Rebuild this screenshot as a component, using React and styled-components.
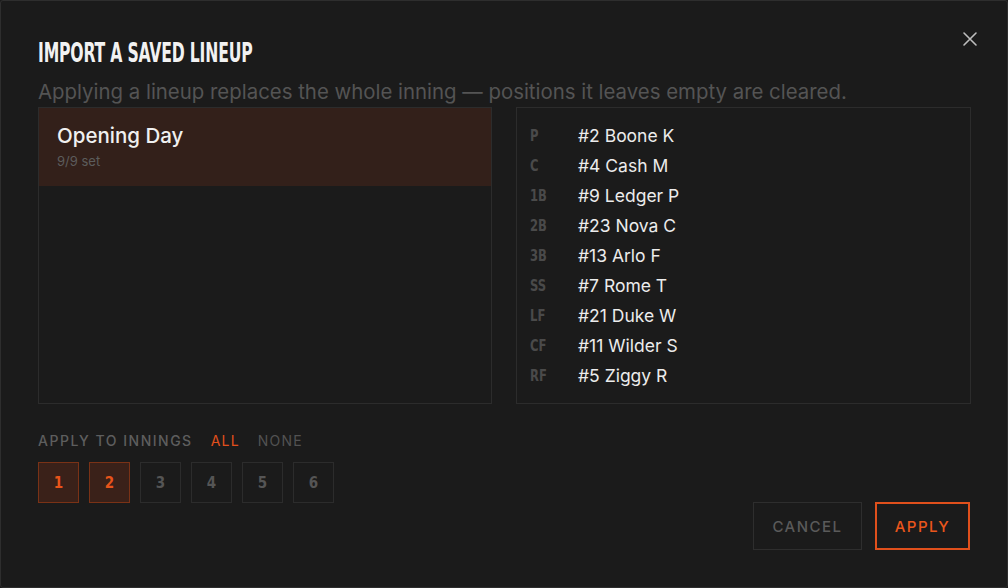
import React, { useState } from 'react'
import styled, { createGlobalStyle } from 'styled-components'

const GlobalStyle = createGlobalStyle`
  html, body { margin: 0; padding: 0; background: #1b1b1b; }
  body { font-family: Inter, "Noto Sans", sans-serif; }
  * { box-sizing: border-box; }
`

const condensed = `"Liberation Sans Narrow", "DejaVu Sans Condensed", sans-serif`

const Dialog = styled.div`
  position: relative;
  width: 1008px;
  height: 588px;
  background: #1b1b1b;
  border: 1px solid #2e2e2e;
  border-radius: 3px;
  padding: 37px 37px 0 37px;
  display: flex;
  flex-direction: column;
`

const Title = styled.h2`
  margin: 0;
  font-family: ${condensed};
  font-weight: 700;
  font-size: 27px;
  line-height: 30px;
  color: #f2f2f2;
  letter-spacing: -0.3px;
  transform: scaleX(0.645);
  transform-origin: left center;
  white-space: nowrap;
`

const CloseBtn = styled.button`
  position: absolute;
  top: 26px;
  right: 25px;
  width: 24px;
  height: 24px;
  padding: 0;
  border: none;
  background: none;
  color: #bdbdbd;
  display: flex;
  align-items: center;
  justify-content: center;
  cursor: pointer;
`

const Subtitle = styled.p`
  margin: 10px 0 0 0;
  font-size: 20.4px;
  line-height: 28px;
  color: #545454;
  white-space: nowrap;
`

const Panels = styled.div`
  display: grid;
  grid-template-columns: 454px 455px;
  gap: 24px;
  height: 297px;
  margin-top: 1px;
`

const Panel = styled.div`
  border: 1px solid #2c2c2c;
  display: flex;
  flex-direction: column;
`

const SavedItem = styled.div`
  background: ${p => (p.$active ? '#33201a' : 'transparent')};
  padding: 15px 18px 0 18px;
  height: 78px;
`

const ItemName = styled.div`
  font-size: 20.5px;
  line-height: 26px;
  color: #f0f0f0;
  font-weight: 500;
`

const ItemMeta = styled.div`
  margin-top: 4px;
  font-size: 13px;
  line-height: 17px;
  color: #5c5c5c;
`

const Roster = styled.div`
  padding: 12px 13px;
  display: flex;
  flex-direction: column;
`

const RosterRow = styled.div`
  display: flex;
  align-items: center;
  height: 30px;
`

const Pos = styled.span`
  width: 48px;
  font-family: ${condensed};
  font-weight: 700;
  font-size: 16.5px;
  color: #4a4a4a;
  display: inline-block;
  transform: scaleX(0.78);
  transform-origin: left center;
`

const Player = styled.span`
  font-size: 17.5px;
  color: #ececec;
`

const ApplyRow = styled.div`
  margin-top: 28px;
  display: flex;
  align-items: center;
  gap: 18px;
  font-size: 14px;
  letter-spacing: 1.5px;
`

const ApplyLabel = styled.span`
  color: #5e5e5e;
  font-weight: 500;
`

const LinkBtn = styled.button`
  border: none;
  background: none;
  padding: 0;
  font: inherit;
  letter-spacing: 1.2px;
  color: ${p => (p.$on ? '#e2501c' : '#525252')};
  cursor: pointer;
`

const InningRow = styled.div`
  margin-top: 13px;
  display: flex;
  gap: 10px;
`

const InningBox = styled.button`
  width: 41px;
  height: 41px;
  padding: 0;
  border: 1px solid ${p => (p.$on ? '#7a3216' : '#2c2c2c')};
  background: ${p => (p.$on ? '#3a2119' : 'transparent')};
  color: ${p => (p.$on ? '#e8541a' : '#555555')};
  font-family: ${condensed};
  font-weight: 700;
  font-size: 15px;
  cursor: pointer;
`

const Footer = styled.div`
  display: flex;
  justify-content: flex-end;
  gap: 13px;
  margin-top: -1px;
`

const ActionBtn = styled.button`
  height: 48px;
  padding: 0;
  width: ${p => (p.$primary ? '95px' : '109px')};
  background: transparent;
  border: ${p => (p.$primary ? '2px solid #e0501c' : '1px solid #2e2e2e')};
  color: ${p => (p.$primary ? '#ea561c' : '#5a5a5a')};
  font-family: Inter, "Noto Sans", sans-serif;
  font-size: 15px;
  font-weight: 500;
  letter-spacing: 1.5px;
  cursor: pointer;
`

const roster = [
  ['P', '#2 Boone K'],
  ['C', '#4 Cash M'],
  ['1B', '#9 Ledger P'],
  ['2B', '#23 Nova C'],
  ['3B', '#13 Arlo F'],
  ['SS', '#7 Rome T'],
  ['LF', '#21 Duke W'],
  ['CF', '#11 Wilder S'],
  ['RF', '#5 Ziggy R'],
]

export default function App() {
  const [innings, setInnings] = useState([1, 2])

  const toggle = n =>
    setInnings(prev => (prev.includes(n) ? prev.filter(i => i !== n) : [...prev, n]))

  return (
    <>
      <GlobalStyle />
      <Dialog>
        <CloseBtn aria-label="Close">
          <svg width="16" height="16" viewBox="0 0 16 16" fill="none" stroke="currentColor" strokeWidth="1.6" strokeLinecap="round">
            <path d="M2 2 L14 14 M14 2 L2 14" />
          </svg>
        </CloseBtn>
        <Title>IMPORT A SAVED LINEUP</Title>
        <Subtitle>Applying a lineup replaces the whole inning — positions it leaves empty are cleared.</Subtitle>
        <Panels>
          <Panel>
            <SavedItem $active>
              <ItemName>Opening Day</ItemName>
              <ItemMeta>9/9 set</ItemMeta>
            </SavedItem>
          </Panel>
          <Panel>
            <Roster>
              {roster.map(([pos, name]) => (
                <RosterRow key={pos}>
                  <Pos>{pos}</Pos>
                  <Player>{name}</Player>
                </RosterRow>
              ))}
            </Roster>
          </Panel>
        </Panels>
        <ApplyRow>
          <ApplyLabel>APPLY TO INNINGS</ApplyLabel>
          <LinkBtn $on onClick={() => setInnings([1, 2, 3, 4, 5, 6])}>ALL</LinkBtn>
          <LinkBtn onClick={() => setInnings([])}>NONE</LinkBtn>
        </ApplyRow>
        <InningRow>
          {[1, 2, 3, 4, 5, 6].map(n => (
            <InningBox key={n} $on={innings.includes(n)} onClick={() => toggle(n)}>
              {n}
            </InningBox>
          ))}
        </InningRow>
        <Footer>
          <ActionBtn>CANCEL</ActionBtn>
          <ActionBtn $primary>APPLY</ActionBtn>
        </Footer>
      </Dialog>
    </>
  )
}
